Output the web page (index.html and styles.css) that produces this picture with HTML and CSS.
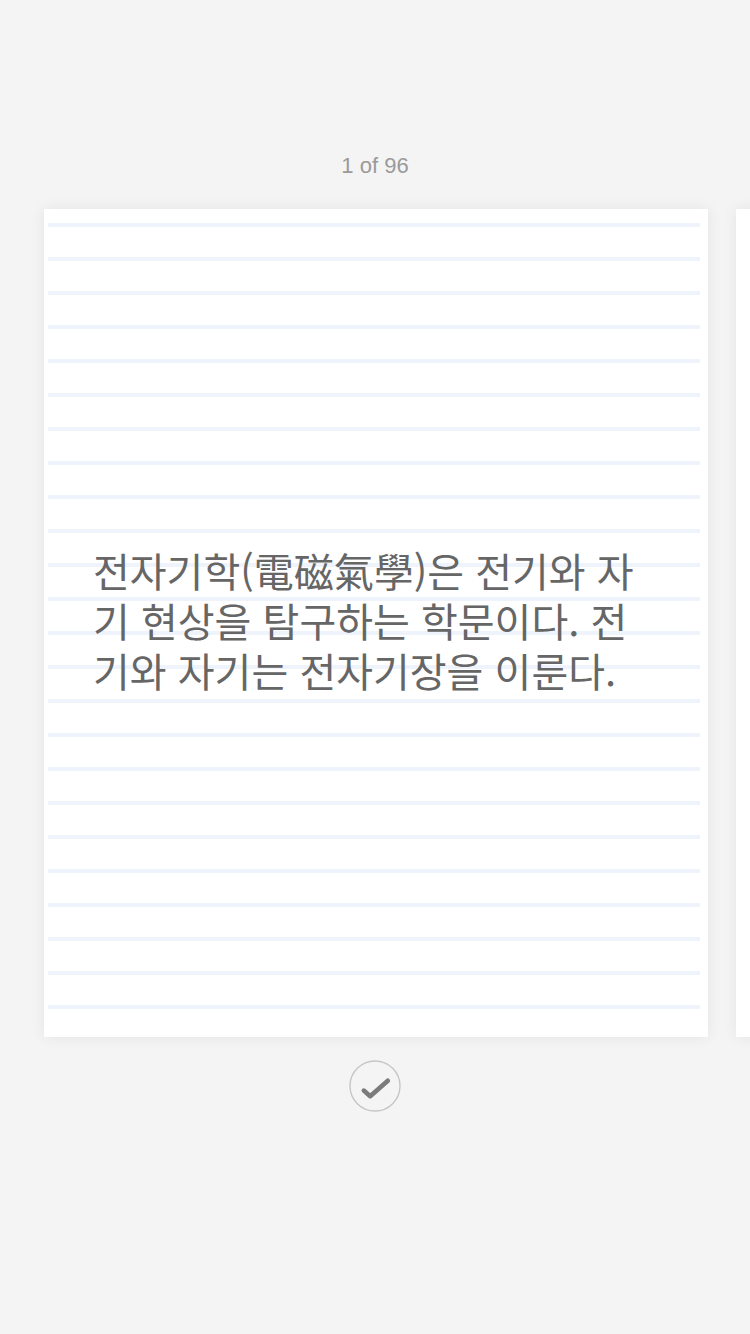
FILE: index.html
```html
<!DOCTYPE html>
<html lang="ko">
<head>
<meta charset="utf-8">
<title>Flashcards</title>
<link rel="stylesheet" href="styles.css">
</head>
<body>
<main class="screen">
  <div class="counter">1 of 96</div>
  <div class="deck">
    <section class="card card-ruled">
      <p class="card-text">전자기학(電磁氣學)은 전기와 자기 현상을 탐구하는 학문이다. 전기와 자기는 전자기장을 이룬다.</p>
    </section>
    <section class="card"></section>
  </div>
  <div class="actions">
    <svg class="check" width="52" height="52" viewBox="0 0 52 52" aria-label="완료">
      <circle cx="26" cy="26" r="25" fill="none" stroke="#c6c6c6" stroke-width="1.4"/>
      <path d="M14.8 30.6 L21.2 36.2 L38.8 20.8" fill="none" stroke="#7b7b7b" stroke-width="4.6" stroke-linecap="round" stroke-linejoin="round"/>
    </svg>
  </div>
</main>
</body>
</html>
```

FILE: styles.css
```css
html, body {
  margin: 0;
  padding: 0;
  background: #f4f4f4;
}

.screen {
  width: 750px;
  height: 1334px;
  overflow: hidden;
  display: flex;
  flex-direction: column;
}

.counter {
  margin-top: 151px;
  height: 30px;
  line-height: 30px;
  text-align: center;
  font-family: "Liberation Sans", Arial, sans-serif;
  font-size: 22px;
  color: #9a9a9a;
}

.deck {
  margin-top: 28px;
  display: flex;
  gap: 28px;
  padding-left: 44px;
}

.card {
  flex: 0 0 664px;
  height: 828px;
  box-sizing: border-box;
  background: #ffffff;
  box-shadow: 0 0 14px rgba(0, 0, 0, 0.07);
}

.card-ruled {
  background:
    linear-gradient(#eff4fc 0 4px, transparent 4px) 4px 14px / calc(100% - 12px) 34px repeat-y,
    #ffffff;
  display: flex;
  align-items: center;
  padding: 0 64px 6px 49px;
}

.card-text {
  margin: 0;
  width: 100%;
  font-family: "Noto Sans CJK KR", "Noto Sans", sans-serif;
  font-size: 40px;
  line-height: 50px;
  color: #666666;
  word-break: break-all;
}

.actions {
  margin-top: 23px;
  display: flex;
  justify-content: center;
}

.check {
  display: block;
}
```
